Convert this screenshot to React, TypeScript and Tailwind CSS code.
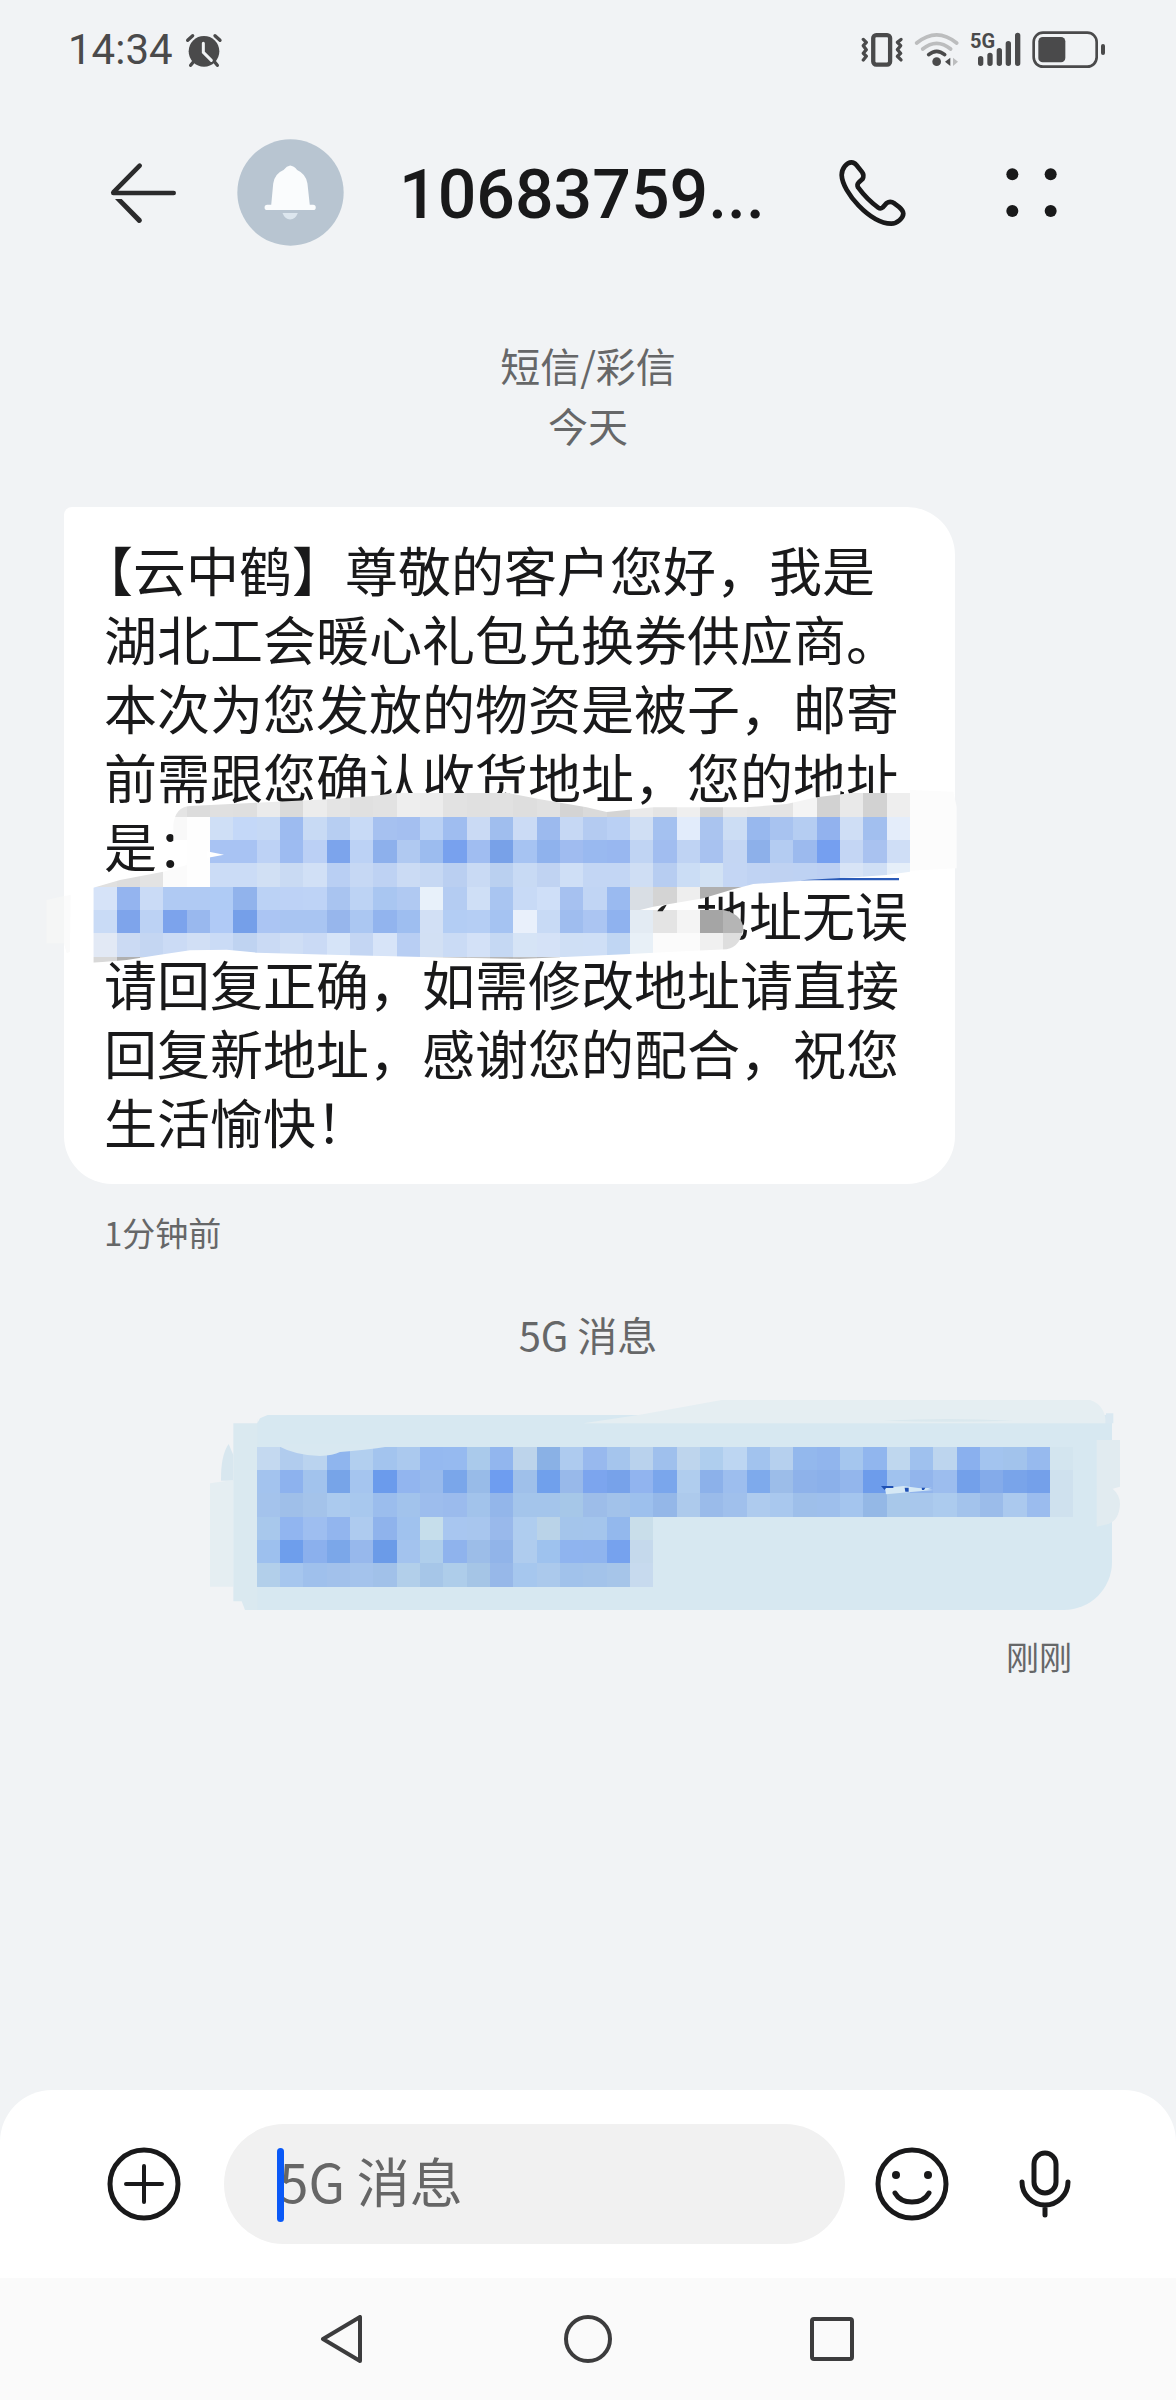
import type { ReactNode } from 'react';

const CELL = 70;

interface MosaicRow {
    x: number;
    y: number;
    colors: string;
}

// Every row is a run of equal cells, starting at x
const addressRows: MosaicRow[] = [
    {
        x: 370,
        y: 100,
        colors: 'e4e4e4 dcdcdc e0e0e0 dfdfdf ebebeb dadada ececec e4e4e4 e0e0e0 e2e2e2 eeeeee ececec e2e2e2 e0e0e0 e1e1e1 dedede e1e1e1 d4d4d4 dadada d4d4d4 eaeaea e4e4e4 efefef d4d4d4 e8e8e8 e6e6e6 e4e4e4 f4f4f4 d2d2d2 e9e9e9 d2d2d2 eeeeee',
    },
    {
        x: 370,
        y: 170,
        colors: 'f9f9f9 fefefe cfdff6 c4d8f8 c6d9f5 9dbbf0 c8daf4 b7cef2 c8daf6 a6c1f0 a4bff0 bad1f4 9fbdf0 cadaf4 a0beee cbdbf5 9cbaee c6d8f4 b4cbf1 bad0f4 d0dff4 a4c1f0 e2ecfb aac4ef ccddf4 98b8ee a8c3f0 b5cdf2 92b2ee cfdef5 a2bfef e4edfa',
    },
    {
        x: 440,
        y: 240,
        colors: 'fefefe a8c3f3 a8c3f3 bdd2f5 9dbbf1 bbd0f5 7ca4ec bcd2f5 8db0ec b0c9f1 9cbcef 78a1ee a0bdf1 78a1e8 a6c3f2 8fb2ed a0bcf0 99b9f0 98b7f0 c0d4f3 a1bdf0 bfd3f3 a8c2f0 c4d6f3 8db0ea b4ccf2 9cbaee 759ff0 c4d6f4 a9c2f0 cfdef6',
    },
    {
        x: 160,
        y: 310,
        colors: 'e0e0e0 dddddd e3e3e3 fbfbfb fefefe cbdcf6 cbdcf6 d1e0f4 c9daf3 d1e0f6 b9cff3 c6d8f4 bed2f3 cbdbf4 c6d8f3 bacff1 c9daf4 bad0f0 c8daf4 c0d3f2 cfdff6 c3d6f4 c3d6f4 cfdef4 b7cdf1 cbddf5 d2e2f4 c4d6f4 c0d3f3 bfd2f2 bed2f3 bdd0f3 d8e4f6 d0dff5 e6eff9',
    },
    {
        x: 160,
        y: 380,
        colors: 'd6e3f8 94b4ef cadbf6 b0caf3 b0caf3 afcbf5 91b3ec bbd2f5 bdd2f6 bed3f6 a9c4f0 bdd3f4 a9c6f1 b0c9f2 e8f1fa b4ccf2 cfdff6 a9c5f1 c8daf6 cfdff8 a6c1f0 c1d5f4 9abaf0 d9dee4 d4d4d4 eeeeee b0b0b0 b0b0b0',
    },
    {
        x: 160,
        y: 450,
        colors: 'c9dbf6 7ea4eb bcd2f4 7ca3ec 99b8ee b0caf6 759fe9 abc5f3 a9c5f2 a9c5f2 97b6ec abc7f2 92b4ee 9ebef0 d2e0f5 b3cdf4 b5cef4 a5c3f2 e9f0fb c8daf5 9fbdef abc5f2 8fb2ef e3ebf3 e4e4e4 f4f4f4 a5a5a5 b5b5b5',
    },
    {
        x: 160,
        y: 520,
        colors: 'e2e9f5 cbdaf3 c4d6f2 cbdbf5 d1dff5 cadbf6 bfd3f1 cadaf4 cfdef5 cadaf5 d6e4f8 c4d6f3 d7e4f8 b8cef3 d2e0f4 cadbf5 d3e1f7 c5d8f3 d6e4f6 d5e2f7 cfdff5 cfdff6 c0d6f3 e8f0f7 fbfbfb fbfbfb f0f0f0 dedede',
    },
    {
        x: 160,
        y: 590,
        colors: 'd8d8d8 b0b0b0 d8d8d8 e8e8e8 e8e8e8 e8e8e8 e8e8e8 e8e8e8 e8e8e8 e8e8e8 e8e8e8 e8e8e8 e8e8e8 e8e8e8 cccccc bdbdbd c4c4c4 b5b5b5 bdbdbd b5b5b5',
    },
];

const replyRows: MosaicRow[] = [
    {
        x: 320,
        y: 200,
        colors: 'c4d9f0 b1ccee bad3ef 8fb5ee b2cfef a3c4ee abc9ee 95b9f0 96baf0 aacaeb 92b6ee bdd4eb 8ab1e5 aecbef 98b9ee a5c5ed b9d2ed 9fc0ed bed5ed afceee bdd6f2 a2c3ee b6d0ee 93b8ed 91b5ed a5c6ee 91b6ee bfd7ee 9fc1ee bdd5ee 8ab0ee a3c4ef a2c3ec 97baee d3e5ef',
    },
    {
        x: 320,
        y: 270,
        colors: 'a3c3ee 8db2ee a2c3ed 77a4e8 a5c5ef 6b9bec 92b5ef 98baec 7aa6ea 98bbe8 6e9df0 9fc0ea 70a0ec 98b9ea 7ca5ee 77a2ea 91b4ef 7aa6ec b0cdee 8cb1ea 9dbeee 7eaaec 9cbde9 8eb2ea 8bb0ea 93b6ec 6d9ceb a0c2ee 92b5ec 9cbdee 73a0ea 84abea 79a4ea 74a0ea cfe1ee',
    },
    {
        x: 320,
        y: 340,
        colors: 'a4c3ec 9fbfe9 a4c3ea abcaee a8c8ee 9bbded a2c3ec 9dbded 9bbbed a2c3eb 93b6ea a4c5eb a4c5eb a6c7e8 9dbde9 a2c2ea 9dc0ed 94b7e8 adcaec 9abbea a0c0ec aecbee a9c8ee 9ebfea 9ebfec a4c5ee 94b8e6 a8c8ea a8c7ec accbee a3c3ec 9bbcea abc9ee 9bbcee cfe1ee',
    },
    {
        x: 320,
        y: 410,
        colors: 'a8c8ec 91b5f0 9ebef0 92b5ee aecbef 8fb3ec a0c2ee c6deeb a8c6f0 a8c6ee 99b9eb afcdef bad3e8 a4c5eb a4c5ec 93b8ed c9deea',
    },
    {
        x: 320,
        y: 480,
        colors: '9dc0ee 6e9eec 8bb0ed 7ba7e9 97b8ec 6b9be8 a3c3ee afceeb 8fb3ed 9cbde8 91b4e9 afccee 9ec2ee 8fb4ef 8fb4ee 76a2ee c5d9ec',
    },
    {
        x: 320,
        y: 550,
        colors: 'b2cfea a6c6ee 9fc0ec a2c1eb a4c3ec a1c1e9 b2cfea a6c6e8 aecdea a5c5e6 97b8e9 a6c7ee abc9ec a1c2eb a3c3ea a6c5e9 c7daee',
    },
];

function Mosaic({ rows }: { rows: MosaicRow[] }) {
    return (
        <g shapeRendering="crispEdges">
            {rows.map((row) =>
                row.colors.split(' ').map((color, i) => (
                    <rect
                        key={`${row.y}-${i}`}
                        x={row.x + i * CELL}
                        y={row.y}
                        width={CELL}
                        height={CELL}
                        fill={`#${color}`}
                    />
                ))
            )}
        </g>
    );
}

function AddressMask() {
    return (
        <svg
            viewBox="0 0 2880 660"
            className="pointer-events-none absolute -left-6 top-[253px] h-[220px] w-[960px] max-w-none"
            aria-hidden="true"
        >
            <defs>
                <clipPath id="address-brush">
                    <path d="M400 240V195Q406 140 450 138L650 128L860 118L1000 108L1060 100L1200 96L1400 98L1500 118L1640 142L1700 156L1840 142L2120 142L2240 132L2330 112L2440 98L2540 92L2610 88V335L2540 345L2380 356L2140 372L2080 388L1990 415L1840 440L1800 450H2050Q2100 460 2110 500Q2105 558 2060 568L1900 575L1770 582L1590 590L1440 597L1150 591L900 585L650 578L560 569L450 571L360 584L260 600L160 608V383L240 360L370 335L440 315V262Z" />
                </clipPath>
            </defs>
            <path d="M20 420L72 408V550H20Z" fill="#f5f6f6" />
            <path d="M72 408L92 405L90 575L80 580L72 550Z" fill="#fbfbfb" />
            <path d="M2610 90L2740 95L2750 140V325L2610 332Z" fill="#fcfcfc" />
            <g clipPath="url(#address-brush)">
                <Mosaic rows={addressRows} />
            </g>
            <path d="M500 274L552 284L500 294Z" fill="#ffffff" />
            <path d="M2280 361L2400 354H2577V361Z" fill="#2b5bb8" />
            <path d="M1852 454Q1862 436 1880 434L1876 442L1868 454Z" fill="#222222" />
        </svg>
    );
}

function ReplyMask() {
    return (
        <svg
            viewBox="0 0 3000 780"
            className="pointer-events-none absolute -left-[107px] -top-[35px] h-[260px] w-[1000px] max-w-none"
            aria-hidden="true"
        >
            <path d="M213 302Q212 225 236 192L250 225V302Z" fill="#d8e7ef" />
            <path d="M180 310L250 300V620H180Z" fill="#e5eef2" />
            <path d="M250 130H322V690L285 690L275 664L250 664Z" fill="#dae9f0" />
            <path d="M320 100H365L330 115L322 130Z" fill="#f1f3f5" />
            <path d="M1300 130L1470 104L1715 60H2820Q2866 75 2868 130Z" fill="#e5eef2" />
            <path d="M2868 100L2890 100V130H2866Z" fill="#dae8f1" />
            <path d="M2200 122Q2390 112 2590 122Q2390 128 2200 122Z" fill="#dae8ee" />
            <path d="M2840 180H2910V320L2888 326Q2910 345 2910 372Q2908 420 2875 432L2840 440Z" fill="#e1ebf0" />
            <Mosaic rows={replyRows} />
            <path d="M380 196Q440 228 510 228Q550 227 570 216Q640 212 720 199V190H380Z" fill="#d8e8f1" />
            <path d="M2205 325L2260 318L2350 330L2208 343Z" fill="#d5e8f5" />
            <path d="M2275 328L2345 323L2325 330L2280 333Z" fill="#d5e8f5" />
            <path d="M2193 318H2230V324H2208L2204 330ZM2264 323H2276V335H2266ZM2315 323H2326L2322 330H2316Z" fill="#1e50b4" />
        </svg>
    );
}

function IconButton({ label, className, children }: { label: string; className: string; children: ReactNode }) {
    return (
        <button type="button" aria-label={label} className={`shrink-0 ${className}`}>
            {children}
        </button>
    );
}

function StatusBar() {
    return (
        <div className="flex h-[100px] items-center justify-between pl-[68px] pr-[70px] text-[#4a4a4b]">
            <div className="flex items-center gap-3">
                <span className="font-[Roboto,sans-serif] text-[42px] leading-[42px]">14:34</span>
                <svg viewBox="403 65 114 105" className="h-[35px] w-[38px]" aria-label="闹钟">
                    <circle cx="460" cy="120" r="46" fill="currentColor" />
                    <g fill="none" stroke="currentColor" strokeWidth="10" strokeLinecap="round">
                        <path d="M411 87L426 73M508 87L493 73M428 152L420 162M492 152L500 162" />
                    </g>
                    <path d="M458 96V123L482 147" fill="none" stroke="#f1f3f5" strokeWidth="9" strokeLinecap="round" />
                </svg>
            </div>
            <div className="flex items-center gap-[10px]">
                <svg viewBox="60 60 130 120" className="h-10 w-[43px]" aria-label="振动">
                    <rect x="97" y="75" width="51" height="89" rx="9" fill="none" stroke="currentColor" strokeWidth="13" />
                    <g fill="none" stroke="currentColor" strokeWidth="10" strokeLinecap="round" strokeLinejoin="round">
                        <path d="M67 88L76 97L67 107L76 119L67 130L76 139L67 150" />
                        <path d="M181 88L170 97L180 107L170 119L180 130L170 139L181 150" />
                    </g>
                </svg>
                <svg viewBox="220 60 138 120" className="h-10 w-[46px]" aria-label="无线网络">
                    <g fill="none" strokeWidth="11" strokeLinecap="round">
                        <path d="M228 99Q288 50 348 99" stroke="#bcbdbe" />
                        <path d="M246 117Q288 83 330 117" stroke="#bcbdbe" />
                        <path d="M264 134Q288 114 312 134" stroke="currentColor" />
                    </g>
                    <circle cx="288" cy="155" r="13" fill="currentColor" />
                    <path d="M329 143V168L313 155Z" fill="currentColor" />
                    <path d="M337 143V168L352 155Z" fill="#bcbdbe" />
                </svg>
                <svg viewBox="388 60 156 120" className="h-10 w-[52px]" aria-label="信号">
                    <text x="388" y="115" fontSize="60" fontWeight="700" fontFamily="Roboto, sans-serif" fill="currentColor">
                        5G
                    </text>
                    <g stroke="currentColor" strokeWidth="16" strokeLinecap="round">
                        <path d="M420 146V160M448 136V160M476 122V160M503 101V160M531 76V160" />
                    </g>
                </svg>
                <svg viewBox="575 60 222 120" className="h-10 w-[74px]" aria-label="电量">
                    <rect x="580" y="68" width="189" height="102" rx="28" fill="none" stroke="currentColor" strokeWidth="8" />
                    <rect x="594" y="81" width="81" height="76" rx="13" fill="currentColor" />
                    <rect x="782" y="102" width="12" height="33" rx="6" fill="currentColor" />
                </svg>
            </div>
        </div>
    );
}

function Header() {
    return (
        <header className="flex h-[185px] items-center pl-[108px] pr-[119px] text-[#19191a]">
            <IconButton label="返回" className="size-[70px]">
                <svg viewBox="55 113 210 210" className="size-full">
                    <path
                        d="M150 136L71 216M71 218H252"
                        fill="none"
                        stroke="#2b2b2c"
                        strokeWidth="14"
                        strokeLinecap="round"
                    />
                    <path d="M76 236H96L155 295A8 8 0 0 1 145 307Z" fill="#2b2b2c" />
                </svg>
            </IconButton>
            <svg viewBox="440 56 322 322" className="ml-[59px] size-[107px] shrink-0" aria-hidden="true">
                <circle cx="601" cy="217" r="160" fill="#b8c5d1" />
                <path
                    d="M543 254L549 190Q553 160 580 149Q590 137 600 136Q611 137 621 149Q648 161 652 190L659 254H669A8 8 0 0 1 669 270H531A8 8 0 0 1 531 254Z"
                    fill="#fafcfd"
                />
                <path d="M577 279H623Q616 298 600 298Q584 298 577 279Z" fill="#dce6ee" />
            </svg>
            <h1 className="ml-[55px] min-w-0 flex-1 truncate pt-1 font-[Roboto,sans-serif] text-[68px] font-medium leading-[80px]">
                10683759...
            </h1>
            <IconButton label="拨打电话" className="size-[72px]">
                <svg viewBox="770 108 215 215" className="size-full">
                    <path
                        d="M813 124C799 124 784 142 784 162C786 213 868 305 932 307C950 307 968 290 968 277C968 269 962 263 955 257L942 247Q929 238 918 246L906 259Q900 264 893 259C870 243 850 222 833 199Q829 190 834 185L846 174Q852 162 845 153L828 132Q822 124 813 124Z"
                        fill="none"
                        stroke="currentColor"
                        strokeWidth="14"
                        strokeLinejoin="round"
                    />
                </svg>
            </IconButton>
            <IconButton label="更多" className="ml-[97px] h-[49px] w-[51px]">
                <svg viewBox="1279 139 153 147" className="size-full" fill="currentColor">
                    <circle cx="1298" cy="158" r="18" />
                    <circle cx="1413" cy="158" r="18" />
                    <circle cx="1298" cy="268" r="18" />
                    <circle cx="1413" cy="268" r="18" />
                </svg>
            </IconButton>
        </header>
    );
}

function Messages() {
    return (
        <main className="flex flex-1 flex-col px-16 text-[#666768]">
            <div className="mt-[50px] text-center text-[40px] leading-[60px]">
                <p>短信/彩信</p>
                <p>今天</p>
            </div>

            {/* Received */}
            <div className="relative mt-[52px] w-[891px] rounded-[48px] rounded-tl-[8px] bg-white px-10 py-7">
                <p className="-indent-6 text-[53px] leading-[69px] text-[#19191a]">
                    【云中鹤】尊敬的客户您好，我是湖北工会暖心礼包兑换券供应商。本次为您发放的物资是被子，邮寄前需跟您确认收货地址，您的地址是：
                    <span className="inline-block w-[690px]" />
                    <span className="inline-block w-[592px]" />
                    地址无误请回复正确，如需修改地址请直接回复新地址，感谢您的配合，祝您生活愉快！
                </p>
                <AddressMask />
            </div>
            <p className="mt-[18px] px-10 text-[33px] leading-[60px]">1分钟前</p>

            <p className="mt-[42px] text-center text-[40px] leading-[60px]">5G 消息</p>

            {/* Sent */}
            <div className="relative mt-[51px] h-[195px] w-[855px] self-end rounded-br-[48px] bg-[#d7e8f1]">
                <ReplyMask />
            </div>
            <p className="mt-4 px-10 text-right text-[33px] leading-[60px]">刚刚</p>
        </main>
    );
}

function Composer() {
    return (
        <form className="flex h-[188px] items-center rounded-t-[52px] bg-white pl-[107px] pr-[105px] text-[#19191a]">
            <IconButton label="添加附件" className="size-[74px]">
                <svg viewBox="0 0 74 74" className="size-full" fill="none" stroke="currentColor">
                    <circle cx="37" cy="37" r="34" strokeWidth="5" />
                    <path d="M37 19V55M19 37H55" strokeWidth="4" strokeLinecap="round" />
                </svg>
            </IconButton>
            <div className="relative ml-[43px] h-[120px] min-w-0 flex-1">
                <input
                    type="text"
                    aria-label="5G 消息"
                    placeholder="5G 消息"
                    className="size-full rounded-full bg-[#f1f1f1] pb-2 pl-[55px] pr-10 text-[53px] outline-none placeholder:text-[#666666]"
                />
                <span className="absolute left-[53px] top-6 h-[74px] w-[7px] rounded-full bg-[#0a59f7]" />
            </div>
            <IconButton label="表情" className="ml-[30px] size-[74px]">
                <svg viewBox="0 0 74 74" className="size-full" fill="none" stroke="currentColor">
                    <circle cx="37" cy="37" r="34" strokeWidth="5" />
                    <path d="M20 46Q25 55 37 55Q49 55 54 46" strokeWidth="5" strokeLinecap="round" />
                    <circle cx="21" cy="28" r="4" fill="currentColor" stroke="none" />
                    <circle cx="53" cy="28" r="4" fill="currentColor" stroke="none" />
                </svg>
            </IconButton>
            <IconButton label="语音输入" className="ml-[70px] h-[74px] w-[52px]">
                <svg viewBox="0 0 52 74" className="size-full" fill="none" stroke="currentColor" strokeWidth="5">
                    <rect x="15" y="6" width="22" height="40" rx="11" />
                    <path d="M3 35A23 23 0 0 0 49 35M26 58V68" strokeLinecap="round" />
                </svg>
            </IconButton>
        </form>
    );
}

function NavBar() {
    return (
        <nav className="flex h-[122px] items-center justify-center gap-[196px] bg-[#fafafa] text-[#3c3c3d]">
            <IconButton label="后退" className="size-12">
                <svg viewBox="0 0 48 48" className="size-full" fill="none" stroke="currentColor" strokeWidth="4">
                    <path d="M40 2V46L3 24Z" strokeLinejoin="round" />
                </svg>
            </IconButton>
            <IconButton label="主屏幕" className="size-12">
                <svg viewBox="0 0 48 48" className="size-full" fill="none" stroke="currentColor" strokeWidth="4">
                    <circle cx="24" cy="24" r="22" />
                </svg>
            </IconButton>
            <IconButton label="最近任务" className="size-12">
                <svg viewBox="0 0 48 48" className="size-full" fill="none" stroke="currentColor" strokeWidth="4">
                    <rect x="4" y="4" width="40" height="40" rx="2" />
                </svg>
            </IconButton>
        </nav>
    );
}

export default function App() {
    return (
        <div
            lang="zh-CN"
            className="flex min-h-screen flex-col overflow-hidden bg-[#f1f3f5] font-['Noto_Sans_CJK_SC',sans-serif]"
        >
            <StatusBar />
            <Header />
            <Messages />
            <Composer />
            <NavBar />
        </div>
    );
}
